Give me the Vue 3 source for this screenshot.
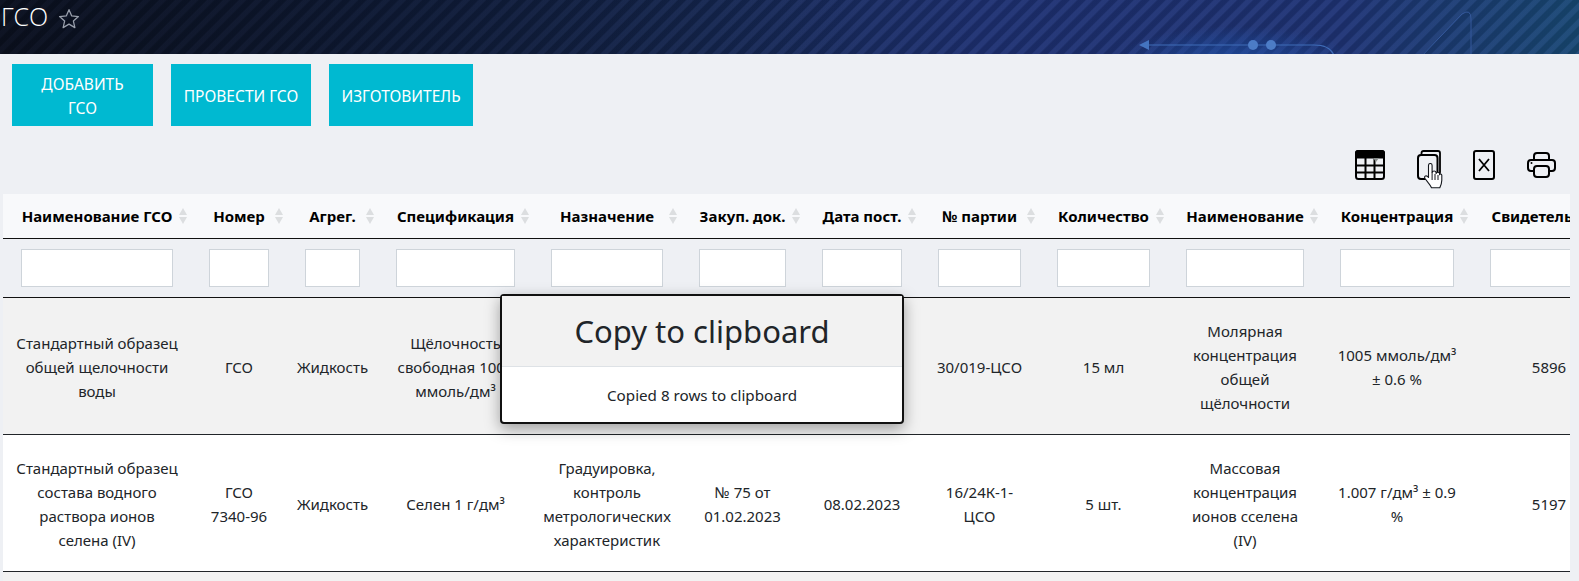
<template>
  <div class="page">
    <header class="banner">
      <svg class="banner-art" width="1579" height="54" viewBox="0 0 1579 54">
        <defs>
          <radialGradient id="glow" cx="0.5" cy="0.5" r="0.5">
            <stop offset="0" stop-color="#1f56b0" stop-opacity="0.75" />
            <stop offset="1" stop-color="#1f56b0" stop-opacity="0" />
          </radialGradient>
        </defs>
        <ellipse cx="1235" cy="66" rx="125" ry="40" fill="url(#glow)" />
        <path d="M1149 45H1314q20 0 21 16" fill="none" stroke="#3f6cb8" stroke-width="1.2" />
        <path d="M1139 45l10-5v10z" fill="#4474c0" />
        <circle cx="1253" cy="45" r="5" fill="#4c7cc6" />
        <circle cx="1271" cy="45" r="5" fill="#4c7cc6" />
        <path d="M1418 60L1462 14q9-6 9 5V60" fill="none" stroke="#35599c" stroke-width="1" />
      </svg>
      <h1 class="title">ГСО</h1>
      <svg class="star" width="22" height="21" viewBox="0 0 21 20">
        <path d="M10.5 1.6l2.6 5.9 6.4.6-4.8 4.3 1.4 6.3-5.6-3.3-5.6 3.3 1.4-6.3L1.500 8.100l6.400-.6z" fill="none" stroke="#9aa0ac" stroke-width="1.200" stroke-linejoin="round" />
      </svg>
    </header>

    <div class="actions">
      <button class="btn btn-add">ДОБАВИТЬ ГСО</button>
      <button class="btn btn-run">ПРОВЕСТИ ГСО</button>
      <button class="btn btn-maker">ИЗГОТОВИТЕЛЬ</button>
    </div>

    <div class="toolbar">
      <svg width="30" height="30" viewBox="0 0 30 30">
        <rect x="1" y="1" width="28" height="28" rx="2.500" fill="none" stroke="#000" stroke-width="2" />
        <path d="M3 0h24q3 0 3 3v5.500H0V3q0-3 3-3z" fill="#000" />
        <path d="M1 15.500h28M1 22.500h28M10.500 8v21M19.500 8v21" stroke="#000" stroke-width="2" />
        <path d="M18 8h6l-3 4z" fill="#8a8f8e" />
      </svg>
      <svg width="24" height="30" viewBox="0 0 24 30">
        <path d="M4.500 4V3q0-2 2-2h14.500q2 0 2 2v19q0 2-2 2h-.5" fill="none" stroke="#000" stroke-width="1.800" />
        <rect x="1" y="5" width="19.500" height="24" rx="3" fill="none" stroke="#000" stroke-width="2" />
      </svg>
      <svg width="22" height="30" viewBox="0 0 22 30">
        <rect x="1" y="1" width="20" height="28" rx="2" fill="none" stroke="#000" stroke-width="2" />
        <path d="M6 9l10 12M16 9L6 21" fill="none" stroke="#000" stroke-width="1.800" />
      </svg>
      <svg width="29" height="26" viewBox="0 0 29 26">
        <path d="M7 8V4q0-3 3-3h9q3 0 3 3v4" fill="none" stroke="#000" stroke-width="2" />
        <path d="M7 19H4q-3 0-3-3v-5q0-3 3-3h21q3 0 3 3v5q0 3-3 3h-3" fill="none" stroke="#000" stroke-width="2" />
        <rect x="7" y="14" width="15" height="11" rx="3" fill="none" stroke="#000" stroke-width="2" />
        <circle cx="4.500" cy="11" r="1" fill="#000" />
      </svg>
      <svg class="cursor" width="19" height="26" viewBox="0 0 19 26">
        <path d="M4.500 2.500q0-2 1.800-2t1.800 2v7q.5-1.500 2-1.500t2 1.500v1q.5-1.300 1.800-1.300t1.700 1.500v1q.5-.9 1.200-.7t1 1.200v5q0 3-2 7.500H7.500q-1-2-3-4.500L1 15.500q-1-2 .5-2.500t3 1.500z" fill="#fff" stroke="#14171d" stroke-width="1.100" stroke-linejoin="round" />
        <path d="M8.100 9.500v7.500M11 11v6M14 12v5" stroke="#14171d" stroke-width="1" />
      </svg>
    </div>

    <div class="table-wrap">
      <table class="data-table">
        <colgroup>
          <col v-for="col in columns" :key="col.title" :style="{ width: col.width + 'px' }" />
        </colgroup>
        <thead>
          <tr class="heads">
            <th v-for="(col, i) in columns" :key="col.title" :class="{ plain: i === columns.length - 1 }">{{ col.title }}</th>
          </tr>
          <tr class="filters">
            <th v-for="col in columns" :key="col.title"><input class="filter" type="text" /></th>
          </tr>
        </thead>
        <tbody>
          <tr v-for="(row, r) in rows" :key="r">
            <td v-for="(cell, c) in row" :key="c">{{ cell }}</td>
          </tr>
          <tr class="next-row"><td :colspan="columns.length"></td></tr>
        </tbody>
      </table>
    </div>

    <div class="modal">
      <div class="modal-head">Copy to clipboard</div>
      <div class="modal-body">Copied 8 rows to clipboard</div>
    </div>
  </div>
</template>

<script setup>
const columns = [
  { title: 'Наименование ГСО', width: 188 },
  { title: 'Номер', width: 96 },
  { title: 'Агрег.', width: 91 },
  { title: 'Спецификация', width: 155 },
  { title: 'Назначение', width: 148 },
  { title: 'Закуп. док.', width: 123 },
  { title: 'Дата пост.', width: 116 },
  { title: '№ партии', width: 119 },
  { title: 'Количество', width: 129 },
  { title: 'Наименование', width: 154 },
  { title: 'Концентрация', width: 150 },
  { title: 'Свидетельство', width: 154 }
]

const rows = [
  [
    'Стандартный образец\nобщей щелочности\nводы',
    'ГСО',
    'Жидкость',
    'Щёлочность\nсвободная 1005\nммоль/дм³',
    '',
    '',
    '',
    '30/019-ЦСО',
    '15 мл',
    'Молярная\nконцентрация\nобщей\nщёлочности',
    '1005 ммоль/дм³\n± 0.6 %',
    '5896'
  ],
  [
    'Стандартный образец\nсостава водного\nраствора ионов\nселена (IV)',
    'ГСО\n7340-96',
    'Жидкость',
    'Селен 1 г/дм³',
    'Градуировка,\nконтроль\nметрологических\nхарактеристик',
    '№ 75 от\n01.02.2023',
    '08.02.2023',
    '16/24К-1-\nЦСО',
    '5 шт.',
    'Массовая\nконцентрация\nионов сселена\n(IV)',
    '1.007 г/дм³ ± 0.9\n%',
    '5197'
  ]
]
</script>

<style>
html,
body {
  overflow: hidden;
  background: #eef0f4;
}
</style>

<style scoped>
.page {
  position: relative;
  width: 1579px;
  height: 581px;
  overflow: hidden;
  font-family: "Noto Sans", "Open Sans", sans-serif;
  font-size: 15px;
  line-height: 24px;
  color: #212529;
  background: #eef0f4;
}

.banner {
  position: relative;
  display: flex;
  align-items: flex-start;
  height: 54px;
  overflow: hidden;
  background:
    linear-gradient(90deg, rgba(10, 15, 28, 0.6) 0%, rgba(12, 22, 46, 0.45) 25%, rgba(18, 36, 78, 0) 55%),
    repeating-linear-gradient(135deg, rgba(140, 160, 240, 0.09) 0 4px, rgba(0, 0, 0, 0.08) 5.500px 10px, rgba(140, 160, 240, 0.09) 11.300px),
    linear-gradient(90deg, #0a0f1c 0%, #0d1830 22%, #14264f 45%, #1c2e6c 62%, #1d3170 85%, #17466f 100%);
}

.banner-art {
  position: absolute;
  left: 0;
  top: 0;
}

.title {
  position: relative;
  margin: 0;
  padding-left: 1px;
  font-family: "Open Sans", sans-serif;
  font-size: 25px;
  font-weight: 300;
  line-height: 32px;
  color: #fff;
}

.star {
  position: relative;
  margin: 8px 0 0 10px;
}

.actions {
  display: flex;
  gap: 18px;
  padding: 10px 12px 0;
}

.btn {
  height: 62px;
  padding: 2px 6px 0;
  border: 0;
  background: #00b9d1;
  color: #fff;
  font: inherit;
  font-size: 15.500px;
  line-height: 24px;
  text-align: center;
}

.btn-add {
  width: 141px;
  padding: 2px 20px 0;
}

.btn-run {
  width: 140px;
}

.btn-maker {
  width: 144px;
}

.toolbar {
  position: relative;
  display: flex;
  justify-content: flex-end;
  align-items: center;
  gap: 32px;
  height: 68px;
  padding: 23px 23px 14px 0;
  box-sizing: border-box;
}

.cursor {
  position: absolute;
  left: 1424px;
  top: 37px;
}

.table-wrap {
  width: 1567px;
  margin-left: 3px;
  overflow: hidden;
}

.data-table {
  width: 1623px;
  table-layout: fixed;
  border-collapse: collapse;
}

th,
td {
  padding: 10px 18px;
  text-align: center;
  vertical-align: middle;
}

.heads th {
  position: relative;
  height: 44px;
  padding: 1px 14px 0;
  box-sizing: border-box;
  border-bottom: 1px solid #111;
  background: #f8f9fb;
  color: #000;
  font-size: 15px;
  font-weight: 700;
  white-space: nowrap;
  overflow: hidden;
}

.heads th:not(.plain)::before,
.heads th:not(.plain)::after {
  content: "";
  position: absolute;
  right: 4px;
  border-left: 4.500px solid transparent;
  border-right: 4.500px solid transparent;
}

.heads th:not(.plain)::before {
  top: 14px;
  border-bottom: 7px solid #dcdee0;
}

.heads th:not(.plain)::after {
  top: 23px;
  border-top: 7px solid #dcdee0;
}

.filters th {
  height: 58px;
  box-sizing: border-box;
  border-bottom: 1px solid #111;
}

.filter {
  display: block;
  width: 100%;
  height: 38px;
  box-sizing: border-box;
  border: 1px solid #ced4da;
  background: #fff;
}

td {
  padding: 21px 2px 19px;
  border-bottom: 1px solid #212529;
  background: #fff;
  white-space: pre;
}

tbody tr:nth-child(odd) td {
  background: #f2f2f2;
}

.next-row td {
  height: 40px;
  border: 0;
}

.modal {
  position: absolute;
  left: 500px;
  top: 294px;
  display: flex;
  flex-direction: column;
  width: 404px;
  height: 130px;
  box-sizing: border-box;
  border: 2px solid #111;
  border-radius: 4px;
  background: #fff;
  box-shadow: 0 5px 15px rgba(0, 0, 0, 0.35);
  text-align: center;
}

.modal-head {
  height: 71px;
  box-sizing: border-box;
  border-bottom: 1px solid #dee2e6;
  background: #f2f2f2;
  font-size: 31px;
  line-height: 71px;
}

.modal-body {
  flex: 1;
  display: flex;
  align-items: center;
  justify-content: center;
  font-size: 15.200px;
}
</style>
